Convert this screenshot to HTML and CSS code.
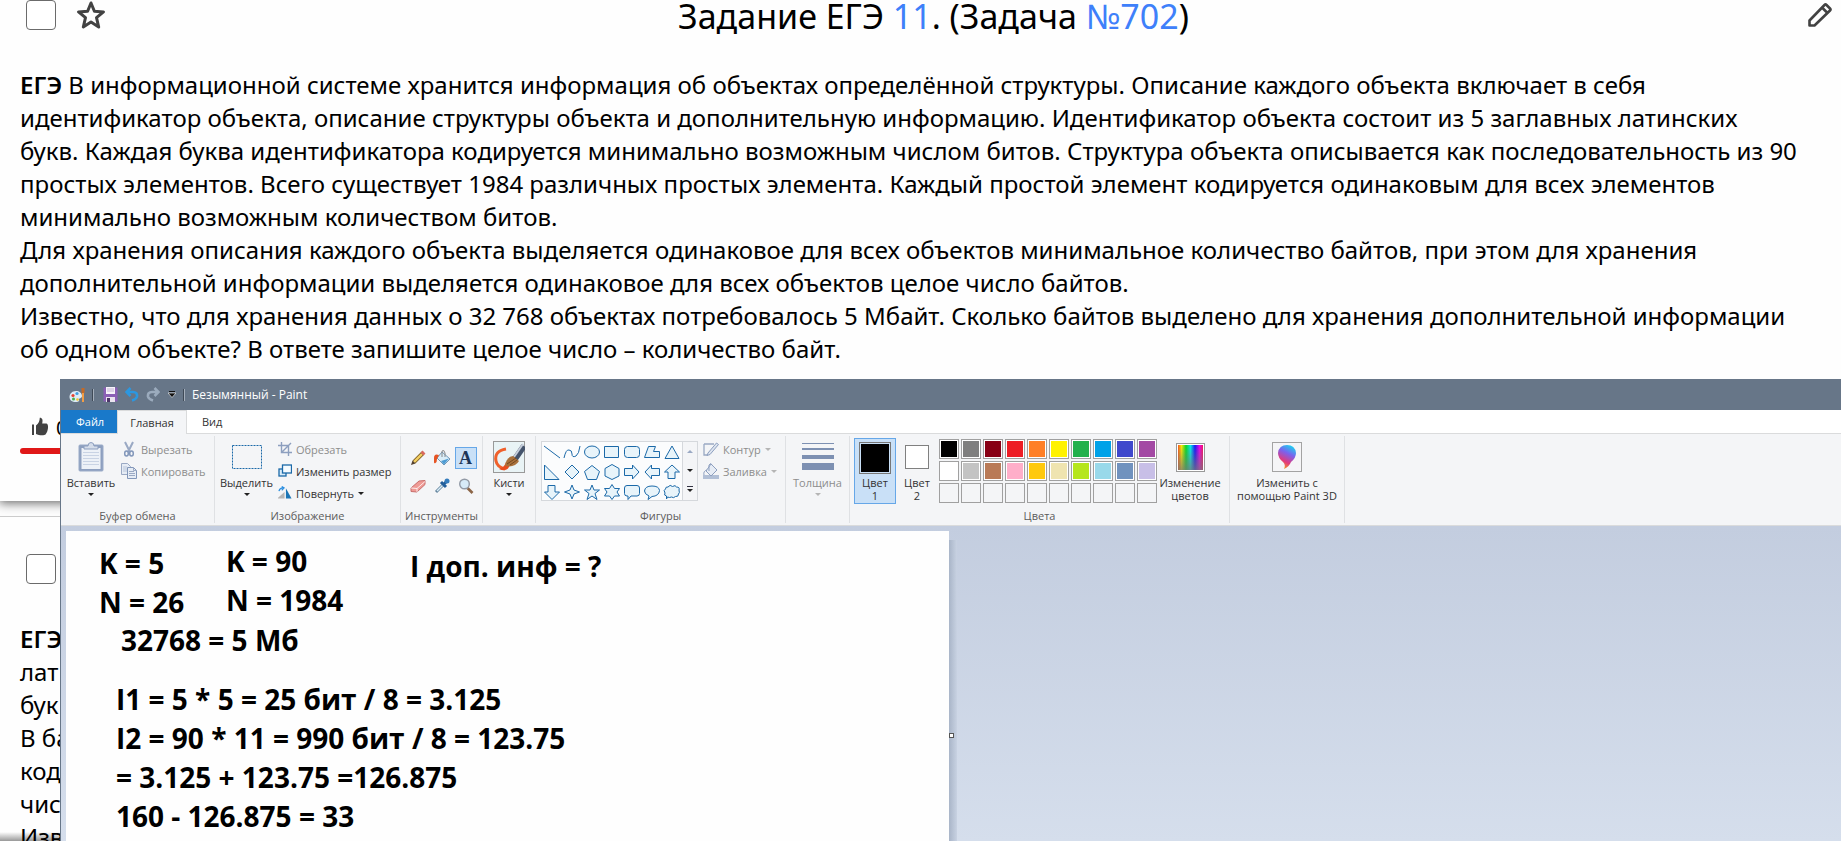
FILE: index.html
```html
<!DOCTYPE html>
<html lang="ru">
<head>
<meta charset="utf-8">
<title>Задание ЕГЭ 11</title>
<link rel="stylesheet" href="styles.css">
</head>
<body>
<main class="page">
  <article class="card">
    <header class="task-head">
      <div class="task-tools">
        <input type="checkbox" class="tick" aria-label="Отметить задачу 702">
        <button class="icon-btn" aria-label="В избранное"><svg width="30" height="30" viewBox="0 0 30 30"><path d="M15 3l3.400 8.200 9.100.700-7 5.800 2.200 9.300L15 22l-7.700 5 2.200-9.300-7-5.800 9.100-.700z" fill="none" stroke="#424242" stroke-width="3" stroke-linejoin="round"/></svg></button>
      </div>
      <h1 class="task-title">Задание ЕГЭ <a href="#t11">11</a>. (Задача <a href="#n702">№702</a>)</h1>
      <button class="icon-btn edit" aria-label="Редактировать"><svg width="26" height="26" viewBox="0 0 26 26"><path d="M2.500 23.500v-5L17.500 3q1-1 2 0l3.500 3.500q1 1 0 2l-15.500 15zM15 5.500l5.500 5.500" fill="none" stroke="#424242" stroke-width="2.600" stroke-linejoin="round"/></svg></button>
    </header>
    <div class="task-text">
      <p><b>ЕГЭ</b> В информационной системе хранится информация об объектах определённой структуры. Описание каждого объекта включает в себя идентификатор объекта, описание структуры объекта и дополнительную информацию. Идентификатор объекта состоит из 5 заглавных латинских<br>букв. Каждая буква идентификатора кодируется минимально возможным числом битов. Структура объекта описывается как последовательность из 90<br>простых элементов. Всего существует 1984 различных простых элемента. Каждый простой элемент кодируется одинаковым для всех элементов минимально возможным количеством битов.</p>
      <p>Для хранения описания каждого объекта выделяется одинаковое для всех объектов минимальное количество байтов, при этом для хранения дополнительной информации выделяется одинаковое для всех объектов целое число байтов.</p>
      <p>Известно, что для хранения данных о 32 768 объектах потребовалось 5 Мбайт. Сколько байтов выделено для хранения дополнительной информации<br>об одном объекте? В ответе запишите целое число – количество байт.</p>
    </div>
    <footer class="votes">
      <button class="vote"><svg width="18" height="20" viewBox="0 0 18 20"><path d="M1 7.500v10.500h2V7.500zM5 8.500C8 6.500 8.500 4 8.800.800c2.700 0 3.200 2.200 2.400 5.700h4.300c2.400.500 2 7.500-1 11-1 1.300-7 1-9.500-.500z" fill="#424242"/></svg><span>0</span></button>
      <div class="vote-bar"></div>
    </footer>
  </article>

  <article class="card next">
    <header class="task-head">
      <div class="task-tools"><input type="checkbox" class="tick" aria-label="Отметить следующую задачу"></div>
    </header>
    <div class="task-text">
      <p><b>ЕГЭ</b><br>лат<br>бук</p>
      <p>В ба<br>код<br>чис</p>
      <p>Изв</p>
    </div>
  </article>
</main>

<section class="window" aria-label="Paint">
  <header class="titlebar">
    <svg width="16" height="16" viewBox="0 0 16 16"><path d="M7 4C3 4 .5 7 .5 10s2.500 5 6.500 5c3 0 3.500-1 3-2.500s3-1 3-3.500c0-3-3-5-6-5z" fill="#dcebf5"/><circle cx="4" cy="8.500" r="1.600" fill="#e8402e"/><circle cx="8" cy="6.500" r="1.600" fill="#3f9de0"/><circle cx="4.500" cy="12" r="1.500" fill="#4caf50"/><circle cx="8.500" cy="12.500" r="1.300" fill="#f4c430"/><path d="M14 1v5" stroke="#c46a26" stroke-width="3"/><path d="M14 6v9" stroke="#f29d45" stroke-width="2"/></svg>
    <i class="bar-sep"></i>
    <button class="bar-btn save" aria-label="Сохранить"><svg width="15" height="15" viewBox="0 0 15 15"><path d="M.5.500h14v14h-14z" fill="#8b5fb5"/><path d="M3 0h9v7H3z" fill="#f7f3fa"/><path d="M4 2h7M4 4h7" stroke="#c5b5d5"/><path d="M3 10h9v5H3z" fill="#eae4ef"/><path d="M4 11h3v4H4z" fill="#4c3668"/></svg></button>
    <button class="bar-btn" aria-label="Отменить"><svg width="14" height="15" viewBox="0 0 14 15"><path d="M1 5h7q4.500 0 4 4.500Q11.500 12 7 13.500M5.500 1L1.500 5l4 4" fill="none" stroke="#2c97e0" stroke-width="2.600"/></svg></button>
    <button class="bar-btn redo" aria-label="Повторить"><svg width="14" height="15" viewBox="0 0 14 15"><path d="M13 5H6Q1.500 5 2 9.500 2.500 12 7 13.500M8.500 1l4 4-4 4" fill="none" stroke="#9babbd" stroke-width="2.600"/></svg></button>
    <button class="bar-btn" aria-label="Настройка панели"><svg width="8" height="7" viewBox="0 0 8 7"><path d="M1 .500h6" stroke="#111"/><path d="M0 2h8L4 6.500z" fill="#111" stroke="#fff" stroke-width=".6"/></svg></button>
    <i class="bar-sep"></i>
    <span class="win-title">Безымянный - Paint</span>
  </header>
  <nav class="tabs">
    <button class="tab file">Файл</button>
    <button class="tab active">Главная</button>
    <button class="tab">Вид</button>
  </nav>
  <div class="ribbon">
    <section class="group clipboard">
      <div class="group-body">
        <button class="big"><span class="pic"><svg width="26" height="30" viewBox="0 0 26 30"><rect x="1" y="3" width="24" height="26" rx="1" fill="#8d9fbf" stroke="#9aabc8"/><rect x="3.500" y="6" width="19" height="21" fill="#edf1f7"/><path d="M5 10.500h16M5 13.500h16M5 16.500h16M5 19.500h16M5 22.500h16" stroke="#c9d3e4"/><path d="M6 7V4h4q0-3.500 3-3.500T16 4h4v3z" fill="#d5ddea" stroke="#8d9fbf"/></svg></span><span>Вставить</span><i class="caret"></i></button>
        <div class="stack">
          <button class="small" disabled><svg width="16" height="16" viewBox="0 0 16 16"><path d="M4 1l5 10M12 1L7 11" stroke="#9aa9c4" stroke-width="2"/><ellipse cx="5.500" cy="12.500" rx="1.800" ry="2.500" fill="none" stroke="#8297ba" stroke-width="1.500"/><ellipse cx="10.500" cy="12.500" rx="1.800" ry="2.500" fill="none" stroke="#8297ba" stroke-width="1.500"/></svg>Вырезать</button>
          <button class="small" disabled><svg width="16" height="16" viewBox="0 0 16 16"><path d="M.5.500h6l3 3v8h-9z" fill="#e6ecf5" stroke="#9aa9c4"/><path d="M2 4h4M2 6h5M2 8h5" stroke="#b8c5da"/><path d="M6.500 4.500h6l3 3v8h-9z" fill="#e6ecf5" stroke="#8297ba"/><path d="M8 8.500h5M8 10.500h6M8 12.500h6M12.500 4.500v3h3" fill="none" stroke="#9aa9c4"/></svg>Копировать</button>
        </div>
      </div>
      <h2 class="group-name">Буфер обмена</h2>
    </section>

    <section class="group image">
      <div class="group-body">
        <button class="big"><span class="pic"><svg width="30" height="24" viewBox="0 0 30 24"><rect x=".5" y=".5" width="29" height="23" fill="none" stroke="#1b69a8" stroke-dasharray="2 1"/></svg></span><span>Выделить</span><i class="caret"></i></button>
        <div class="stack">
          <button class="small" disabled><svg width="14" height="14" viewBox="0 0 14 14"><path d="M0 3.500h10.500V14M3.500 0v10.500H14M3.500 10.500L13 1" fill="none" stroke="#8d9fbf" stroke-width="1.400"/></svg>Обрезать</button>
          <button class="small"><svg width="14" height="14" viewBox="0 0 14 14"><rect x="1" y="5" width="7" height="7" fill="#d8ecf9" stroke="#1b69a8" stroke-width="1.300"/><rect x="4.500" y="1" width="9" height="8" fill="#f5fbff" stroke="#1b69a8" stroke-width="1.300"/></svg>Изменить размер</button>
          <button class="small"><svg width="14" height="14" viewBox="1 0 15 14"><path d="M0 13h8V6z" fill="#b5b5b5"/><path d="M9.500 13V2L15.500 13z" fill="#1b75b5"/><path d="M2 5q1-3.500 4-3.500M5 0l2.500 1.600L5 4" fill="none" stroke="#2c8fe0" stroke-width="1.300"/></svg>Повернуть <i class="caret"></i></button>
        </div>
      </div>
      <h2 class="group-name">Изображение</h2>
    </section>

    <section class="group tools">
      <div class="group-body tool-grid">
        <button class="tool" aria-label="Карандаш"><svg width="16" height="16" viewBox="0 0 16 16"><path d="M4 12L13 3" stroke="#826126" stroke-width="4"/><path d="M4 12L12 4" stroke="#f4cf63" stroke-width="2.400"/><path d="M12 4l2-2" stroke="#d9695f" stroke-width="4"/><path d="M1 15l1.500-4.500 3 3z" fill="#554331"/></svg></button>
        <button class="tool" aria-label="Заливка"><svg width="18" height="16" viewBox="0 0 18 16"><path d="M9 2l8 7-6 6-7-7z" fill="#d9edf8" stroke="#7298b8"/><path d="M8 11l8-2.500-5 6z" fill="#4c9bd3"/><path d="M9 7V1q2-2 3 2v4" fill="none" stroke="#888"/><path d="M6 5Q1 3 1 8v4q0 2 1.500 1T4 9z" fill="#e65424"/></svg></button>
        <button class="tool on" aria-label="Текст">A</button>
        <button class="tool" aria-label="Ластик"><svg width="16" height="14" viewBox="0 0 16 14"><path d="M1 9l8-7 6-.5v4L7 13l-6-.500z" fill="#ef9a95" stroke="#c86d6b"/><path d="M1 9l6 .500 8-7M7 9.500V13" fill="none" stroke="#fff" stroke-width=".8"/></svg></button>
        <button class="tool" aria-label="Палитра"><svg width="16" height="16" viewBox="0 0 16 16"><path d="M2 14l7-7" stroke="#64849e" stroke-width="3"/><path d="M3 13l6-6" stroke="#d9edf8" stroke-width="1.400"/><path d="M7 4l5 5M10 6l3-3" stroke="#225e9a" stroke-width="3"/><circle cx="13" cy="3" r="2.500" fill="#347cbc"/></svg></button>
        <button class="tool" aria-label="Масштаб"><svg width="16" height="16" viewBox="0 0 16 16"><path d="M9.500 10l5 5" stroke="#8b6547" stroke-width="2.600"/><circle cx="6.500" cy="6" r="4.800" fill="#d7ebf9" stroke="#929aa6" stroke-width="1.400"/></svg></button>
      </div>
      <h2 class="group-name">Инструменты</h2>
    </section>

    <section class="group brushes">
      <div class="group-body">
        <button class="big"><span class="pic"><svg width="32" height="32" viewBox="0 0 32 32"><rect x=".5" y=".5" width="31" height="31" fill="#e9f3f5" stroke="#999"/><path d="M13 8Q1 10 3 20q1 6 9 8" fill="none" stroke="#f0602b" stroke-width="3"/><path d="M6 28q9 4 11-5l-4-2q-1 5-7 7z" fill="#e94d1e"/><path d="M22 18L31 5" stroke="#44536b" stroke-width="6"/><path d="M21 16l9-13" stroke="#c6cedb" stroke-width="2"/><path d="M12 25q1-9 8-10l6 5q-4 7-14 5z" fill="#a9713b"/><path d="M14 23l9-6M17 24l7-5" stroke="#74481f"/></svg></span><span>Кисти</span><i class="caret"></i></button>
      </div>
    </section>

    <section class="group shapes">
      <div class="group-body">
        <div class="gallery">
          <div class="shape-grid">
            <button aria-label="Линия"><svg viewBox="0 0 18 18"><path d="M1 3l16 12"/></svg></button>
            <button aria-label="Кривая"><svg viewBox="0 0 18 18"><path d="M1 15q2-9 5-8 3 0 3 4t4 2q3-2 4-10" fill="none"/></svg></button>
            <button aria-label="Овал"><svg viewBox="0 0 18 18"><ellipse cx="9" cy="9" rx="7.500" ry="6"/></svg></button>
            <button aria-label="Прямоугольник"><svg viewBox="0 0 18 18"><path d="M1.500 3.500h14v11h-14z"/></svg></button>
            <button aria-label="Скруглённый прямоугольник"><svg viewBox="0 0 18 18"><rect x="1.500" y="3.500" width="15" height="11" rx="3"/></svg></button>
            <button aria-label="Многоугольник"><svg viewBox="0 0 18 18"><path d="M5.500 3.500h7l-2 5h6v6h-15z"/></svg></button>
            <button aria-label="Треугольник"><svg viewBox="0 0 18 18"><path d="M9 3l7 12.500H2z"/></svg></button>
            <button aria-label="Прямоугольный треугольник"><svg viewBox="0 0 18 18"><path d="M1.500 2v14.500h14.500z"/></svg></button>
            <button aria-label="Ромб"><svg viewBox="0 0 18 18"><path d="M9 2l7 7-7 7-7-7z"/></svg></button>
            <button aria-label="Пятиугольник"><svg viewBox="0 0 18 18"><path d="M9 2.500l7.500 6-3 8h-9l-3-8z"/></svg></button>
            <button aria-label="Шестиугольник"><svg viewBox="0 0 18 18"><path d="M9 1.500l7 4v7.500l-7 3.500-7-3.500V5.500z"/></svg></button>
            <button aria-label="Стрелка вправо"><svg viewBox="0 0 18 18"><path d="M1.500 5.500h8V2l6.500 7-6.500 7v-3.500h-8z"/></svg></button>
            <button aria-label="Стрелка влево"><svg viewBox="0 0 18 18"><path d="M16.500 5.500h-8V2L2 9l6.500 7v-3.500h8z"/></svg></button>
            <button aria-label="Стрелка вверх"><svg viewBox="0 0 18 18"><path d="M5 15.500V9H1.500L9 2l7.500 7H12v6.500z"/></svg></button>
            <button aria-label="Стрелка вниз"><svg viewBox="0 0 18 18"><path d="M5 2.500V9H1.500L9 16.500 16.500 9H12V2.500z"/></svg></button>
            <button aria-label="Звезда 4"><svg viewBox="0 0 18 18"><path d="M9 2l2 5 5.500 2-5.500 2-2 5-2-5-5.500-2L7 7z"/></svg></button>
            <button aria-label="Звезда 5"><svg viewBox="0 0 18 18"><path d="M9 2l2 5h5.500l-4.500 3.500 2 6L9 13l-5 3.500 2-6L1.500 7H7z"/></svg></button>
            <button aria-label="Звезда 6"><svg viewBox="0 0 18 18"><path d="M9 1.500l2.500 4h5L14 9l2.500 4h-5L9 16.500 6.500 13h-5L4 9 1.500 5.500h5z"/></svg></button>
            <button aria-label="Выноска"><svg viewBox="0 0 18 18"><path d="M4 2.500h10q2.500 0 2.500 2.500v5.500q0 2.500-2.500 2.500H8l-3 3.500V13H4q-2.500 0-2.500-2.500V5Q1.500 2.500 4 2.500z"/></svg></button>
            <button aria-label="Овальная выноска"><svg viewBox="0 0 18 18"><path d="M6 13Q1.500 11 1.500 8q.5-5 7.500-5t7.500 4.500Q16 13 9 13.500L5 16.500z"/></svg></button>
            <button aria-label="Облако"><svg viewBox="0 0 18 18"><path d="M5 4q2-3 4.500-.500 3-2 4 .500 3.500 0 2.500 3 1 3-.500 4 0 3-3 2.500-2 2-4 .500-2 1-4 0l-1 2v-3q-3-.500-1.500-3Q0 7 2.500 6q0-2.500 2.500-2z"/></svg></button>
          </div>
          <div class="gallery-scroll">
            <button disabled aria-label="Вверх"><i class="caret up"></i></button>
            <button aria-label="Вниз"><i class="caret"></i></button>
            <button aria-label="Все фигуры"><i class="caret lined"></i></button>
          </div>
        </div>
        <div class="stack">
          <button class="small" disabled><svg width="16" height="16" viewBox="0 0 16 16"><path d="M1 3h10M1 3v11h3" fill="none" stroke="#9aa9c4" stroke-width="1.300"/><path d="M5 12L13.500 2l2 1.500L7 13.500l-3 1z" fill="#dde4ef" stroke="#8d9fbf"/></svg>Контур <i class="caret"></i></button>
          <button class="small" disabled><svg width="16" height="16" viewBox="0 0 16 16"><path d="M0 12h16v4H0z" fill="#b1bfd6"/><path d="M8 1l6 6-6 6-5-5z" fill="#e6ecf5" stroke="#8d9fbf"/><path d="M4 7Q0 8 1 12M6 8V2q2-3 3 0" fill="none" stroke="#8d9fbf"/></svg>Заливка <i class="caret"></i></button>
        </div>
      </div>
      <h2 class="group-name">Фигуры</h2>
    </section>

    <section class="group size">
      <div class="group-body">
        <button class="big" disabled><span class="pic"><svg width="32" height="28" viewBox="0 0 32 28"><path d="M0 0h32v1H0zM0 5h32v2H0zM0 12h32v4H0zM0 20h32v7H0z" fill="#7d90b2"/></svg></span><span>Толщина</span><i class="caret"></i></button>
      </div>
    </section>

    <section class="group colors">
      <div class="group-body">
        <button class="big color-one"><span class="pic"><i class="chip large"></i></span><span>Цвет<br>1</span></button>
        <button class="big color-two"><span class="pic"><i class="chip"></i></span><span>Цвет<br>2</span></button>
        <div class="palette">
          <button class="black" aria-label="Чёрный"></button><button class="gray" aria-label="Серый 50%"></button><button class="maroon" aria-label="Тёмно-красный"></button><button class="red" aria-label="Красный"></button><button class="orange" aria-label="Оранжевый"></button><button class="yellow" aria-label="Жёлтый"></button><button class="green" aria-label="Зелёный"></button><button class="azure" aria-label="Бирюзовый"></button><button class="indigo" aria-label="Индиго"></button><button class="purple" aria-label="Лиловый"></button>
          <button class="white" aria-label="Белый"></button><button class="silver" aria-label="Серый 25%"></button><button class="brown" aria-label="Коричневый"></button><button class="pink" aria-label="Розовый"></button><button class="gold" aria-label="Золотой"></button><button class="cream" aria-label="Светло-жёлтый"></button><button class="lime" aria-label="Травяной"></button><button class="sky" aria-label="Голубой"></button><button class="steel" aria-label="Сине-серый"></button><button class="lilac" aria-label="Бледно-лиловый"></button>
          <button disabled></button><button disabled></button><button disabled></button><button disabled></button><button disabled></button><button disabled></button><button disabled></button><button disabled></button><button disabled></button><button disabled></button>
        </div>
        <button class="big edit-colors"><span class="pic"><i class="spectrum"></i></span><span>Изменение<br>цветов</span></button>
      </div>
      <h2 class="group-name">Цвета</h2>
    </section>

    <section class="group paint3d">
      <div class="group-body">
        <button class="big"><span class="pic"><svg width="30" height="30" viewBox="0 0 30 30"><defs><linearGradient id="drop" x1="0.700" y1="0" x2="0.300" y2="1"><stop offset="0" stop-color="#19d3f0"/><stop offset=".35" stop-color="#7a62ee"/><stop offset=".7" stop-color="#e23a7c"/><stop offset="1" stop-color="#f5a31c"/></linearGradient></defs><rect x=".5" y=".5" width="29" height="29" fill="#f5f5f7" stroke="#a3a3a3"/><path d="M12 27q2-4-1-7-5-4-5-9 1-8 9-8t9 8q0 5-5 9-2 5-7 7z" fill="url(#drop)"/></svg></span><span>Изменить с<br>помощью Paint 3D</span></button>
      </div>
    </section>
  </div>
  <div class="workspace">
    <div class="canvas">
      <p class="note n1">K = 5<br>N = 26</p>
      <p class="note n2">K = 90<br>N = 1984</p>
      <p class="note n3">I доп. инф = ?</p>
      <p class="note n4">32768 = 5 Мб</p>
      <p class="note n5">I1 = 5 * 5 = 25 бит / 8 = 3.125<br>I2 = 90 * 11 = 990 бит / 8 = 123.75<br>= 3.125 + 123.75 =126.875<br>160 - 126.875 = 33</p>
      <i class="handle"></i>
    </div>
    <div class="canvas-shadow"></div>
  </div>
</section>
</body>
</html>
```

FILE: styles.css
```css
* { box-sizing: border-box; }
html, body { height: 100%; }
body {
  margin: 0;
  position: relative;
  overflow: hidden;
  background: #fefefe;
  color: #000;
  font-family: "Noto Sans", sans-serif;
}
button { margin: 0; padding: 0; border: 0; background: none; font: inherit; color: inherit; }
svg { display: block; flex: none; }
p, h1, h2 { margin: 0; font-weight: 400; }

/* Task cards */
.page { position: relative; height: 100%; overflow: hidden; background: #fdfdfd; }
.page::after {
  content: ""; position: absolute; left: 0; right: 0; bottom: 0; height: 9px;
  background: linear-gradient(transparent, #0006);
}
.card { background: #fefefe; box-shadow: 0 1px 10px 1px #666; padding-bottom: 47px; margin-bottom: 15px; }
.task-head {
  display: grid;
  grid-template-columns: 1fr auto 1fr;
  align-items: start;
  padding-left: 26px;
}
.task-tools { display: flex; gap: 20px; }
.tick {
  appearance: none;
  width: 30px; height: 30px; margin: 0;
  border: 1px solid #6b6b6b; border-radius: 4px;
  background: #fff;
}
.icon-btn { display: block; }
.edit { justify-self: end; margin: 2px 8px 0 0; }
.task-title { font-size: 34px; line-height: 32px; }
.task-title a { color: #3e80fa; text-decoration: none; }
.task-text { padding: 36px 20px 0; font-size: 24px; line-height: 33px; }
.task-text b { font-weight: 600; }
.votes { padding: 48px 20px 0; }
.vote { display: flex; align-items: center; gap: 7px; height: 28px; padding-left: 11px; font-size: 20px; }
.vote-bar { height: 6px; margin-top: 7px; border-radius: 3px; background: #e01818; }
.next { border-top: 1px solid #ccc; padding-top: 37px; position: relative; box-shadow: none; }
.next .task-text { padding-top: 38px; }

/* Paint window */
.window {
  position: absolute;
  top: 379px; right: 0; bottom: 0; left: 60px;
  display: flex; flex-direction: column;
  border-left: 1px solid #677688;
  background: #fff;
  font-family: "Open Sans", "Noto Sans", sans-serif;
  font-size: 11px; line-height: 13px;
  color: #333;
}
.titlebar {
  display: flex; align-items: center; gap: 7px;
  height: 31px; padding-left: 8px;
  background: #677688; color: #fff;
}
.bar-sep { width: 2px; height: 12px; border-left: 1px solid #3f4a57; border-right: 1px solid #a4aebb; }
.save { margin-left: 2px; }
.redo { margin-right: 1px; }
.win-title { font-size: 12px; }
.tabs { display: flex; height: 24px; border-bottom: 1px solid #dadbdc; }
.tab { height: 23px; padding: 0 15px; }
.file { width: 56px; background: #1979ca; color: #fff; }
.active { height: 24px; width: 70px; padding: 0; border: 1px solid #dadbdc; border-bottom: 0; background: #f4f5f7; }

.ribbon { display: flex; height: 92px; padding-top: 2px; background: #f4f5f7; border-bottom: 1px solid #dadbdc; white-space: nowrap; }
.group { display: flex; flex-direction: column; flex: none; height: 87px; border-right: 1px solid #dfe1e4; }
.group-body { display: flex; height: 73px; padding-top: 2px; }
.group-name { font-size: 11px; line-height: 14px; text-align: center; color: #5c5c5c; }
.clipboard { width: 154px; }
.image { width: 186px; }
.tools { width: 82px; }
.brushes { width: 53px; }
.shapes { width: 250px; }
.size { width: 64px; }
.colors { width: 380px; }
.paint3d { width: 115px; }

.big { display: flex; flex-direction: column; align-items: center; height: 66px; width: 60px; }
.pic { display: flex; align-items: center; justify-content: center; height: 38px; flex: none; }
.big .caret { margin-top: 4px; }
.image .big { width: 63px; }
.brushes .big, .size .big { width: 100%; }
.paint3d .big { width: 100%; }
button:disabled { color: #8d8d8d; }
.caret { display: inline-block; border: 3px solid transparent; border-top-color: #222; border-bottom: 0; vertical-align: middle; }
button:disabled .caret { border-top-color: #b5b5b5; }
button:disabled .caret.up { border-top: 0; border-bottom: 3px solid #9aa9c4; }
.caret.lined { position: relative; }
.caret.lined::before { content: ""; position: absolute; left: -3px; top: -6px; width: 6px; height: 1px; background: #334; }
.stack { display: flex; flex-direction: column; }
.small { display: flex; align-items: center; gap: 4px; height: 22px; }

.tool-grid { display: grid; grid-template-columns: repeat(3, 22px); grid-template-rows: 22px 22px; gap: 6px 2px; justify-content: center; padding-top: 11px; }
.tool { display: flex; align-items: center; justify-content: center; }
.on { border: 1px solid #66a7e8; background: #c9e0f7; font: bold 18px/20px "Liberation Serif", serif; color: #1d3557; }

.shapes .group-body { padding-left: 5px; gap: 5px; }
.gallery { display: flex; width: 157px; height: 60px; margin-top: 3px; border: 1px solid #d5d8dc; background: #fbfcfd; }
.shape-grid { display: grid; grid-template-columns: repeat(7, 20px); grid-auto-rows: 20px; }
.shape-grid svg { width: 18px; height: 18px; margin: 0 1px; fill: #e8f4fa; stroke: #1b69a8; }
.gallery-scroll { display: grid; grid-template-rows: repeat(3, 1fr); flex: 1; border-left: 1px solid #d5d8dc; background: #f4f5f7; }
.gallery-scroll button { display: flex; align-items: center; justify-content: center; }

.colors .group-body { padding-left: 4px; }
.color-one { width: 42px; border: 1px solid #66a7e8; background: #c9e0f7; }
.color-one .pic { height: 37px; }
.color-two { width: 42px; }
.chip { width: 24px; height: 24px; border: 1px solid #808080; background: #fff; }
.chip.large { width: 32px; height: 32px; border-color: #777; background: #000; box-shadow: inset 0 0 0 1px #c9e0f7; }
.palette { display: grid; grid-template-columns: repeat(10, 20px); grid-auto-rows: 20px; gap: 2px; padding: 1px 0 0 1px; }
.palette button { border: 1px solid #a0a0a0; box-shadow: inset 0 0 0 1px #fff; }
.palette button:disabled { box-shadow: none; }
.black { background: #000; } .gray { background: #7f7f7f; } .maroon { background: #880015; } .red { background: #ed1c24; }
.orange { background: #ff7f27; } .yellow { background: #fff200; } .green { background: #22b14c; } .azure { background: #00a2e8; }
.indigo { background: #3f48cc; } .purple { background: #a349a4; } .white { background: #fff; } .silver { background: #c3c3c3; }
.brown { background: #b97a57; } .pink { background: #ffaec9; } .gold { background: #ffc90e; } .cream { background: #efe4b0; }
.lime { background: #b5e61d; } .sky { background: #99d9ea; } .steel { background: #7092be; } .lilac { background: #c8bfe7; }
.edit-colors { width: 66px; }
.spectrum {
  width: 29px; height: 29px; border: 1px solid #999; box-shadow: inset 0 0 0 1px #fff;
  background: linear-gradient(transparent, #777c), linear-gradient(90deg, #f22, #fe0, #0d2, #0ee, #11f, #e0e, #f13);
}

.workspace { display: flex; flex: 1; padding: 5px 0 0 5px; background: linear-gradient(#c3cddf, #d5deec); }
.canvas { position: relative; width: 48%; max-width: 883px; flex: 1 0 auto; background: #fefefe; }
.canvas-shadow { width: 8px; margin-top: 9px; background: linear-gradient(90deg, #a9b5c8, #c8d2e2); }
.handle { position: absolute; left: 100%; top: 202px; width: 5px; height: 5px; border: 1px solid #555; background: #fff; z-index: 1; }
.note { position: absolute; font: 700 28px/39px "Open Sans", "Noto Sans", sans-serif; color: #000; white-space: nowrap; }
.n1 { left: 33px; top: 13px; }
.n2 { left: 160px; top: 11px; }
.n3 { left: 344px; top: 16px; }
.n4 { left: 55px; top: 90px; }
.n5 { left: 50px; top: 149px; }
```
